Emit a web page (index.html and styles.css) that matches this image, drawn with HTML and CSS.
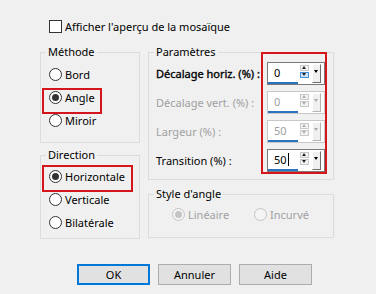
FILE: index.html
```html
<!DOCTYPE html>
<html lang="fr">
<head>
  <meta charset="UTF-8">
  <title>Mosaïque - Angle</title>
  <link rel="stylesheet" href="styles.css">
</head>
<body>
  <div class="dialog">
    <div class="check-row">
      <span class="checkbox"></span>
      <span>Afficher l'aperçu de la mosaïque</span>
    </div>

    <div class="columns">
      <div class="col-left">
        <fieldset class="group method">
          <legend>Méthode</legend>
          <div class="group-body">
            <div class="radio-row"><span class="radio"></span>Bord</div>
            <div class="radio-row mark mark-angle"><span class="radio checked"></span>Angle</div>
            <div class="radio-row"><span class="radio"></span>Miroir</div>
          </div>
        </fieldset>

        <fieldset class="group direction">
          <legend>Direction</legend>
          <div class="group-body">
            <div class="radio-row mark mark-horiz"><span class="radio checked"></span>Horizontale</div>
            <div class="radio-row"><span class="radio"></span>Verticale</div>
            <div class="radio-row"><span class="radio"></span>Bilatérale</div>
          </div>
        </fieldset>
      </div>

      <div class="col-right">
        <fieldset class="group params">
          <legend>Paramètres</legend>
          <div class="group-body param-grid">
            <div class="param-labels">
              <div class="param-label strong">Décalage horiz. (%) :</div>
              <div class="param-label disabled">Décalage vert. (%) :</div>
              <div class="param-label disabled">Largeur (%) :</div>
              <div class="param-label">Transition (%) :</div>
            </div>
            <div class="spin-col">
              <div class="spin">
                <span class="spin-value">0</span>
                <span class="spin-arrows"><i class="arrow up"></i><i class="arrow down hover"></i></span>
                <span class="spin-drop"></span>
              </div>
              <div class="spin disabled">
                <span class="spin-value">0</span>
                <span class="spin-arrows"><i class="arrow up"></i><i class="arrow down"></i></span>
                <span class="spin-drop"></span>
              </div>
              <div class="spin disabled">
                <span class="spin-value">50</span>
                <span class="spin-arrows"><i class="arrow up"></i><i class="arrow down"></i></span>
                <span class="spin-drop"></span>
              </div>
              <div class="spin">
                <span class="spin-value">50<span class="caret"></span></span>
                <span class="spin-arrows"><i class="arrow up"></i><i class="arrow down"></i></span>
                <span class="spin-drop"></span>
              </div>
            </div>
          </div>
        </fieldset>

        <fieldset class="group corner">
          <legend>Style d'angle</legend>
          <div class="group-body corner-row">
            <div class="radio-row disabled linear"><span class="radio checked"></span>Linéaire</div>
            <div class="radio-row disabled"><span class="radio"></span>Incurvé</div>
          </div>
        </fieldset>
      </div>
    </div>

    <div class="buttons">
      <button class="btn default">OK</button>
      <button class="btn">Annuler</button>
      <button class="btn">Aide</button>
    </div>
  </div>
</body>
</html>
```

FILE: styles.css
```css
body {
  margin: 0;
  background-color: #f0f0f0;
  font-family: "Noto Sans", "Open Sans", sans-serif;
  font-size: 11px;
  color: #000;
}

.dialog {
  width: 376px;
  padding-top: 18px;
  box-sizing: border-box;
}

/* top checkbox */
.check-row {
  display: flex;
  align-items: center;
  height: 16px;
  padding-left: 49px;
  gap: 3px;
}

.checkbox {
  width: 11px;
  height: 11px;
  border: 1px solid #333;
  background-color: #fff;
}

.columns {
  display: flex;
  gap: 8px;
  margin-top: 10px;
  padding-left: 40px;
}

.col-left {
  width: 100px;
}

.col-right {
  width: 186px;
}

/* group boxes */
.group {
  margin: 0;
  padding: 0;
  min-width: 0;
  border: 1px solid #dcdcdc;
}

.group legend {
  margin-left: 5px;
  padding: 0 2px;
  height: 16px;
  line-height: 16px;
}

.method .group-body {
  padding: 3px 0 10px 8px;
}

.direction {
  margin-top: 4px;
}

.direction .group-body {
  padding: 2px 0 4px 8px;
}

.params .group-body {
  padding: 2px 8px 7px 7px;
}

.corner {
  margin-top: 6px;
}

.corner .group-body {
  padding: 1px 0 11px 23px;
}

/* radios */
.radio-row {
  position: relative;
  display: flex;
  align-items: center;
  height: 23px;
  gap: 3px;
}

.radio {
  width: 11px;
  height: 11px;
  border: 1px solid #333;
  border-radius: 50%;
  background-color: #fff;
  display: flex;
  align-items: center;
  justify-content: center;
}

.radio.checked::before {
  content: "";
  width: 7px;
  height: 7px;
  border-radius: 50%;
  background-color: #333;
}

.radio-row.disabled {
  color: #a0a0a0;
}

.radio-row.disabled .radio {
  border-color: #c4c4c4;
  background-color: #f4f4f4;
}

.radio-row.disabled .radio.checked::before {
  background-color: #c4c4c4;
}

.corner-row {
  display: flex;
}

.linear {
  width: 82px;
}

/* red tutorial marks */
.mark::after {
  content: "";
  position: absolute;
  border: 2px solid #d4161c;
  box-sizing: border-box;
}

.mark-angle::after {
  left: -7px;
  top: 2px;
  width: 60px;
  height: 26px;
}

.mark-horiz::after {
  left: -7px;
  top: 0;
  width: 91px;
  height: 27px;
}

/* parameters */
.param-grid {
  display: flex;
}

.param-labels {
  width: 111px;
  display: flex;
  flex-direction: column;
  gap: 6px;
}

.param-label {
  height: 23px;
  display: flex;
  align-items: center;
  white-space: nowrap;
}

.param-label.strong {
  -webkit-text-stroke: 0.35px #000;
}

.param-label.disabled {
  color: #a0a0a0;
}

.spin-col {
  position: relative;
  display: flex;
  flex-direction: column;
  gap: 6px;
}

.spin-col::after {
  content: "";
  position: absolute;
  left: -6px;
  right: -2px;
  top: -10px;
  bottom: -2px;
  border: 2px solid #d4161c;
}

.spin {
  width: 58px;
  height: 23px;
  box-sizing: border-box;
  border: 1px solid #7a7a7a;
  background-color: #fff;
  display: flex;
  align-items: flex-start;
}

.spin.disabled {
  border-color: #c8c8c8;
  color: #a0a0a0;
}

.spin-value {
  width: 30px;
  height: 21px;
  box-sizing: border-box;
  padding-left: 6px;
  border-bottom: 2px solid #2a72c2;
  display: flex;
  align-items: center;
}

.caret {
  width: 1px;
  height: 13px;
  margin-left: 1px;
  background-color: #000;
}

.spin-arrows {
  margin: 2px 0 0 2px;
  display: flex;
  flex-direction: column;
  gap: 1px;
}

.arrow {
  position: relative;
  width: 9px;
  height: 6px;
  box-sizing: border-box;
  border: 1px solid #c8c8c8;
  background-color: #f4f4f4;
}

.arrow::before {
  content: "";
  position: absolute;
  left: 1px;
  top: 0;
  border-left: 2.5px solid transparent;
  border-right: 2.5px solid transparent;
}

.arrow.up::before {
  border-bottom: 3px solid #222;
}

.arrow.down::before {
  border-top: 3px solid #222;
}

.arrow.hover {
  border-color: #4a90d9;
  background-color: #cce4f7;
}

.spin.disabled .arrow.up::before {
  border-bottom-color: #b0b0b0;
}

.spin.disabled .arrow.down::before {
  border-top-color: #b0b0b0;
}

.spin-drop {
  position: relative;
  margin: 1px 0 0 3px;
  width: 9px;
  height: 19px;
  box-sizing: border-box;
  background-color: #f0f0f0;
  border-top: 1px solid #fff;
  border-left: 1px solid #fff;
  border-right: 1px solid #6d6d6d;
  border-bottom: 1px solid #6d6d6d;
}

.spin-drop::before {
  content: "";
  position: absolute;
  left: 1px;
  top: 5px;
  border-left: 2.5px solid transparent;
  border-right: 2.5px solid transparent;
  border-top: 3px solid #000;
}

.spin.disabled .spin-drop {
  border-right-color: #b4b4b4;
  border-bottom-color: #b4b4b4;
}

.spin.disabled .spin-drop::before {
  border-top-color: #a8a8a8;
}

/* buttons */
.buttons {
  display: flex;
  gap: 8px;
  margin-top: 25px;
  padding-left: 77px;
}

.btn {
  width: 73px;
  height: 21px;
  box-sizing: border-box;
  font-family: inherit;
  font-size: 11px;
  color: #000;
  background-color: #e1e1e1;
  border: 1px solid #adadad;
  padding: 0;
}

.btn.default {
  border: 2px solid #0078d7;
}
```
